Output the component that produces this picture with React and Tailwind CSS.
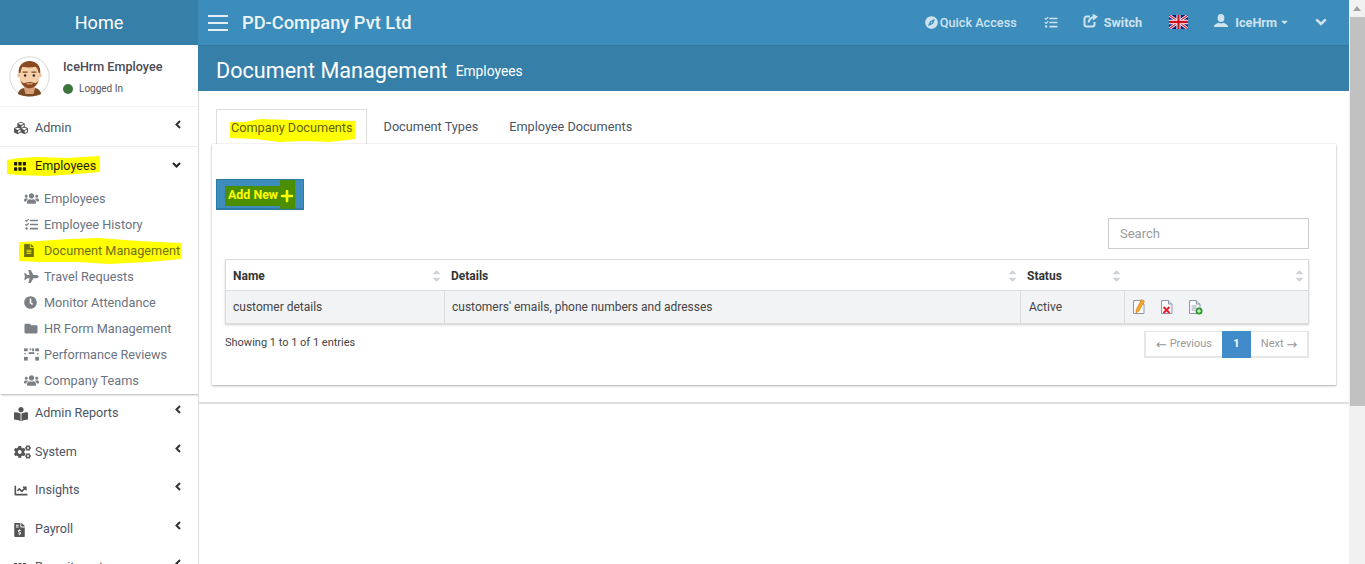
import React from "react";
import {
  FaCubes, FaUsers, FaTasks, FaFileAlt, FaPlane, FaClock, FaFolder,
  FaBookReader, FaCogs, FaChartLine, FaFileInvoiceDollar,
  FaCompass, FaPlus, FaCaretDown, FaSortUp, FaSortDown,
} from "react-icons/fa";

function Marker({ className, points, viewW, viewH }) {
  return (
    <svg viewBox={`0 0 ${viewW} ${viewH}`} preserveAspectRatio="none" className={"absolute max-w-none " + className}>
      <polygon points={points} fill="#ffff00" />
    </svg>
  );
}

function GridIcon({ className }) {
  return (
    <svg viewBox="0 0 12 9" fill="currentColor" className={className}>
      <rect x="0" y="0" width="3.2" height="3.6" rx=".5" />
      <rect x="4.400" y="0" width="3.200" height="3.600" rx=".5" />
      <rect x="8.800" y="0" width="3.200" height="3.600" rx=".5" />
      <rect x="0" y="5.200" width="3.200" height="3.600" rx=".5" />
      <rect x="4.400" y="5.200" width="3.200" height="3.600" rx=".5" />
      <rect x="8.800" y="5.200" width="3.200" height="3.600" rx=".5" />
    </svg>
  );
}

function ReviewIcon({ className }) {
  return (
    <svg viewBox="0 0 16 13" fill="currentColor" className={className}>
      <rect x="0" y="0" width="4" height="3" />
      <rect x="6" y="0" width="1.800" height="2" />
      <rect x="8.600" y="0" width="2" height="3" />
      <rect x="12" y="0" width="4" height="3" />
      <rect x="0.500" y="5" width="1.500" height="1.500" />
      <rect x="5" y="4" width="6" height="2" />
      <rect x="14" y="5" width="1.500" height="1.500" />
      <rect x="0" y="9" width="4" height="4" />
      <rect x="12" y="9" width="4" height="4" />
    </svg>
  );
}

function ShareIcon({ className }) {
  return (
    <svg viewBox="0 0 15 15" fill="none" stroke="currentColor" className={className}>
      <path d="M7 3.500H3.500a2 2 0 0 0-2 2v6a2 2 0 0 0 2 2h6a2 2 0 0 0 2-2V9" strokeWidth="2" />
      <path d="M5.500 9.500c.5-3 2.500-5 5.500-5.500" strokeWidth="2" />
      <path d="M9.500 0.500L15 3.800 10 7.500z" fill="currentColor" stroke="none" />
    </svg>
  );
}

function BustIcon({ className }) {
  return (
    <svg viewBox="0 0 14 13" fill="currentColor" className={className}>
      <ellipse cx="7" cy="4" rx="3.400" ry="4" />
      <path d="M0 13c0-3 2.500-3.300 4.800-4.300.7.500 1.400.8 2.200.8s1.500-.3 2.200-.8C11.500 9.700 14 10 14 13z" />
    </svg>
  );
}

function BoldDown({ className }) {
  return (
    <svg viewBox="0 0 12 8" fill="none" stroke="currentColor" strokeWidth="2.600" className={className}>
      <polyline points="1.300,1.300 6,6 10.700,1.300" />
    </svg>
  );
}

function Chevron({ open }) {
  return open ? (
    <svg viewBox="0 0 9 6" className="h-[6px] w-[9px]" fill="none" stroke="#222" strokeWidth="2">
      <polyline points="1,1 4.500,4.500 8,1" />
    </svg>
  ) : (
    <svg viewBox="0 0 6 9" className="h-[9px] w-[6px]" fill="none" stroke="#333" strokeWidth="2">
      <polyline points="5,1 1.500,4.500 5,8" />
    </svg>
  );
}

function MenuRow({ icon: Icon, label, open, highlight, extra, iconClass }) {
  return (
    <div className={"flex h-[38.6px] shrink-0 items-center pl-[14px] pr-[17px] text-[12.6px] " + (highlight ? "text-[#1d1d00] " : "text-[#4b5563] ") + (extra || "")}>
      <span className="relative flex h-[15px] items-center">
        {highlight && (
          <Marker
            className="-left-[7px] -top-[3px] h-[20px] w-[93px]"
            viewW={93} viewH={20}
            points="0,4 12,2 30,1 60,2 93,0 93,16 70,18 40,20 10,19 0,18"
          />
        )}
        <span className="relative flex w-[21px] items-center">
          <Icon className={iconClass || "h-[13px] w-[13px] text-[#555]"} />
        </span>
        <span className="relative whitespace-nowrap">{label}</span>
      </span>
      <span className={"ml-auto " + (open ? "-mt-[4px]" : "-mt-[8px]")}>
        <Chevron open={open} />
      </span>
    </div>
  );
}

function SubRow({ icon: Icon, label, highlight, iconClass }) {
  return (
    <div className={"flex h-[26px] items-center pl-[24px] text-[12.7px] " + (highlight ? "text-[#6f6f12]" : "text-[#6b7280]")}>
      <span className="relative flex h-[15px] items-center">
        {highlight && (
          <Marker
            className="-left-[5px] -top-[5px] h-[26px] w-[162px]"
            viewW={162} viewH={26}
            points="0,4 20,3 50,1 80,0 120,3 162,5 162,21 130,24 90,26 60,24 20,24 0,23"
          />
        )}
        <span className="relative mr-[4px] flex w-[16px] items-center">
          <Icon className={iconClass || "h-[13px] w-[15px] text-[#7b7f86]"} />
        </span>
        <span className="relative whitespace-nowrap">{label}</span>
      </span>
    </div>
  );
}

function Avatar() {
  return (
    <svg viewBox="0 0 42 42" className="h-[41px] w-[41px] shrink-0">
      <circle cx="21" cy="21" r="20.200" fill="#fff" stroke="#d5d5d5" />
      <path d="M9 39c1-5 5-7 12-7s11 2 12 7c-3 1.600-7 2.500-12 2.500S12 40.600 9 39z" fill="#7a4a25" />
      <path d="M15 32h12l-2 7h-8z" fill="#d9a37d" />
      <circle cx="10.500" cy="20" r="2" fill="#efbe98" />
      <circle cx="31.500" cy="20" r="2" fill="#efbe98" />
      <path d="M11 16c0-6 4-9 10-9s10 3 10 9v8c0 5-5 9-10 9s-10-4-10-9z" fill="#f6cfab" />
      <path d="M10 18c-1-8 4-13 11-13s12 5 11 13l-2-1c0-3-1-5-3-6-4 1-9 1-13 0-1 1-2 3-2 6z" fill="#8a4a20" />
      <circle cx="16.500" cy="20" r="1.300" fill="#3a2a20" />
      <circle cx="25.500" cy="20" r="1.300" fill="#3a2a20" />
      <path d="M14 16.500h5M23 16.500h5" stroke="#7a4a25" strokeWidth="1.200" />
      <path d="M12 25c1 5 5 8 9 8s8-3 9-8c-1 2-3 3-5 2.500-2-1-6-1-8 0-2 .5-4-.5-5-2.500z" fill="#8a4a20" />
      <path d="M18 28.500h6" stroke="#f6cfab" strokeWidth="1" />
    </svg>
  );
}

function Flag() {
  return (
    <svg viewBox="0 0 60 40" preserveAspectRatio="none" className="h-[14px] w-[19px]">
      <rect width="60" height="40" fill="#1a1a7a" />
      <path d="M0 0L60 40M60 0L0 40" stroke="#fff" strokeWidth="8" />
      <path d="M0 0L60 40M60 0L0 40" stroke="#cf1020" strokeWidth="3" />
      <path d="M30 0V40M0 20H60" stroke="#fff" strokeWidth="13" />
      <path d="M30 0V40M0 20H60" stroke="#cf1020" strokeWidth="7" />
    </svg>
  );
}

function Sort() {
  return (
    <span className="relative ml-auto h-[14px] w-[8px] shrink-0 text-[#cfd2d6]">
      <FaSortUp className="absolute left-0 top-0 h-[12px] w-[9px]" />
      <FaSortDown className="absolute left-0 top-[2px] h-[12px] w-[9px]" />
    </span>
  );
}

function DocBase({ children }) {
  return (
    <svg viewBox="0 0 16 16" className="h-[16px] w-[16px]">
      <path d="M2.500 1.500h7l3.500 3.500v9.500h-10.500z" fill="#fbfbfd" stroke="#8d97ad" />
      <path d="M9.500 1.500v3.500h3.500" fill="#dfe4ee" stroke="#8d97ad" />
      {children}
    </svg>
  );
}

function HeadCell({ label, className }) {
  return (
    <div className={"flex items-center pr-[5px] pt-[1px] font-bold text-[#333] " + className}>
      <span>{label}</span>
      <Sort />
    </div>
  );
}

function Arrow({ children }) {
  return <span className="text-[13px] leading-none font-['DejaVu_Sans',sans-serif]">{children}</span>;
}

export default function App() {
  return (
    <div className="flex h-[564px] w-[1365px] overflow-hidden bg-white font-['Roboto',sans-serif]">
      <aside className="flex h-full w-[199px] shrink-0 flex-col overflow-hidden border-r border-[#dcdcdc] bg-white">
        <div className="flex h-[45px] shrink-0 items-center justify-center bg-[#367fa9] text-[18px] text-white">Home</div>
        <div className="flex h-[61px] shrink-0 items-center pl-[9px] pt-[1px]">
          <Avatar />
          <div className="ml-[13px] mt-[3px]">
            <div className="text-[12.6px] font-medium leading-[16px] text-[#4b4b55]">IceHrm Employee</div>
            <div className="mt-[7px] flex items-center text-[10px] leading-[14px] text-[#555]">
              <span className="mr-[6px] h-[10px] w-[10px] rounded-full bg-[#3c763d]" />
              Logged In
            </div>
          </div>
        </div>
        <div className="shrink-0 border-t border-[#f2f2f2]">
          <div className="border-b border-[#f2f2f2]">
            <MenuRow icon={FaCubes} label="Admin" extra="pt-[4px]" iconClass="h-[14px] w-[14px] text-[#555]" />
          </div>
        </div>
        <div className="h-[247px] shrink-0 shadow-[1px_1px_2px_rgba(0,0,0,0.3)]">
          <MenuRow icon={GridIcon} label="Employees" open highlight extra="pt-[2px]" iconClass="h-[9px] w-[12px] text-[#1d1d00]" />
          <div>
            <SubRow icon={FaUsers} label="Employees" />
            <SubRow icon={FaTasks} label="Employee History" />
            <SubRow icon={FaFileAlt} label="Document Management" highlight iconClass="h-[13px] w-[10px] text-[#6f6f12]" />
            <SubRow icon={FaPlane} label="Travel Requests" />
            <SubRow icon={FaClock} label="Monitor Attendance" iconClass="h-[13px] w-[13px] text-[#7b7f86]" />
            <SubRow icon={FaFolder} label="HR Form Management" iconClass="h-[13px] w-[14px] text-[#7b7f86]" />
            <SubRow icon={ReviewIcon} label="Performance Reviews" />
            <SubRow icon={FaUsers} label="Company Teams" />
          </div>
        </div>
        <MenuRow icon={FaBookReader} label="Admin Reports" extra="pt-[2px]" iconClass="h-[14px] w-[14px] text-[#555]" />
        <MenuRow icon={FaCogs} label="System" extra="pt-[2px]" iconClass="h-[14px] w-[17px] text-[#555]" />
        <MenuRow icon={FaChartLine} label="Insights" iconClass="h-[13px] w-[14px] text-[#555]" />
        <MenuRow icon={FaFileInvoiceDollar} label="Payroll" extra="pt-[2px]" iconClass="h-[14px] w-[11px] text-[#555]" />
        <MenuRow icon={GridIcon} label="Recruitment" iconClass="h-[9px] w-[12px] text-[#555]" />
      </aside>

      <main className="-ml-[1px] flex h-full min-w-0 flex-1 flex-col">
        <header className="flex h-[46px] shrink-0 items-center border-b border-[#34789f] bg-[#3c8dbc] pl-[10px] pr-[22px]">
          <div className="flex w-[20px] flex-col gap-[5px]">
            <span className="h-[2px] bg-[#e3eef5]" />
            <span className="h-[2px] bg-[#e3eef5]" />
            <span className="h-[2px] bg-[#e3eef5]" />
          </div>
          <div className="ml-[14px] text-[18.3px] font-medium text-[#eef5f9]">PD-Company Pvt Ltd</div>
          <div className="ml-auto flex items-center text-[12.7px] font-medium text-[#cfe3ef]">
            <FaCompass className="mr-[2px] h-[13px] w-[13px]" />
            <span>Quick Access</span>
            <FaTasks className="ml-[27px] h-[13px] w-[14px]" />
            <ShareIcon className="ml-[25px] -mt-[3px] h-[15px] w-[15px]" />
            <span className="ml-[6px] font-bold">Switch</span>
            <span className="ml-[27px] flex"><Flag /></span>
            <BustIcon className="ml-[26px] -mt-[3px] h-[13px] w-[14px]" />
            <span className="ml-[7px] font-bold">IceHrm</span>
            <FaCaretDown className="ml-[4px] h-[10px] w-[7px]" />
            <BoldDown className="ml-[27px] h-[8px] w-[12px]" />
          </div>
        </header>
        <div className="flex h-[45px] shrink-0 items-center bg-[#367fa9] pl-[18px] pt-[4px] text-white">
          <span className="text-[21.6px] leading-none">Document Management</span>
          <span className="ml-[8px] mt-[3px] text-[13.8px] leading-none">Employees</span>
        </div>
        <div className="h-[313px] shrink-0 border-b-2 border-[#dfdfdf]">
          <div className="relative ml-[18px] mt-[18px] flex h-[35px] text-[12.7px] text-[#4b5563]">
            <div className="flex h-[36px] items-center border border-b-0 border-[#dddddd] bg-white pl-[14px] pr-[13px]">
              <span className="relative flex h-[15px] items-center text-[#5f5f10]">
                <Marker
                  className="-left-[1px] -top-[1px] h-[23px] w-[125px]"
                  viewW={125} viewH={23}
                  points="0,3 15,3 30,0 60,1 90,1 125,2 125,20 100,23 75,22 50,23 25,20 0,19"
                />
                <span className="relative">Company Documents</span>
              </span>
            </div>
            <div className="flex items-center pl-[17px]">Document Types</div>
            <div className="flex items-center pl-[31px]">Employee Documents</div>
          </div>
          <div className="relative ml-[14px] mr-[13px] h-[241px] bg-white pl-[4px] pr-[27px] pt-[35px] shadow-[0_1px_2px_rgba(0,0,0,0.3),0_0_1px_rgba(0,0,0,0.2)]">
            <div className="flex h-[31px] w-[88px] items-center justify-center border border-b-2 border-[#2f7aa6] bg-[#3c8dbc]">
              <span className="relative mt-[3px] flex h-[20px] items-center bg-[#4b8f00] pl-[3px] pr-[1px] text-[12.4px] font-bold text-[#ffff00]">
                Add New
                <span className="absolute right-0 -top-[6px] h-[29px] w-[15px] bg-[#4b8f00]" />
                <FaPlus className="relative ml-[2px] h-[14px] w-[14px]" />
              </span>
            </div>
            <div className="mt-[8px] flex justify-end">
              <div className="flex h-[31px] w-[201px] items-center border border-[#cccccc] px-[11px] text-[13px] text-[#999]">Search</div>
            </div>
            <div className="ml-[9px] mt-[10px] border border-[#dcdcdc] text-[12px] shadow-[0_1px_2px_rgba(0,0,0,0.2)]">
              <div className="grid h-[31px] grid-cols-[219px_576px_104px_1fr] border-b border-[#dcdcdc]">
                <HeadCell label="Name" className="pl-[7px]" />
                <HeadCell label="Details" className="pl-[6px]" />
                <HeadCell label="Status" className="pl-[6px]" />
                <HeadCell label="" className="pl-[6px]" />
              </div>
              <div className="grid h-[32px] grid-cols-[219px_576px_104px_1fr] bg-[#f2f3f5] text-[#444]">
                <div className="flex items-center border-r border-[#dcdcdc] pl-[7px]">customer details</div>
                <div className="flex items-center border-r border-[#dcdcdc] pl-[7px]">customers' emails, phone numbers and adresses</div>
                <div className="flex items-center border-r border-[#dcdcdc] pl-[8px]">Active</div>
                <div className="flex items-center gap-[12px] pl-[6px]">
                  <DocBase>
                    <path d="M10.500 0.500l3 1.500-5.500 10-3 2 .2-3.500z" fill="#f2a71e" stroke="#c8701a" strokeWidth=".5" />
                  </DocBase>
                  <DocBase>
                    <path d="M4.500 8l6 6M10.500 8l-6 6" stroke="#e5222a" strokeWidth="2" />
                  </DocBase>
                  <DocBase>
                    <circle cx="12" cy="12" r="3.500" fill="#2a9a2a" />
                    <path d="M12 10v4M10 12h4" stroke="#fff" strokeWidth="1" />
                    <path d="M4.500 7h5M4.500 9h5M4.500 11h3.500" stroke="#9aa4b8" strokeWidth="1" />
                  </DocBase>
                </div>
              </div>
            </div>
            <div className="ml-[9px] mt-[7px] flex items-start justify-between">
              <div className="mt-[4px] text-[11px] text-[#444]">Showing 1 to 1 of 1 entries</div>
              <div className="flex h-[27px] text-[11px] text-[#999]">
                <div className="flex w-[78px] items-center justify-center border-2 border-t border-r-0 border-[#e6e6e6]"><Arrow>←</Arrow>&nbsp;Previous</div>
                <div className="flex w-[29px] items-center justify-center bg-[#428bca] font-bold text-white">1</div>
                <div className="flex w-[58px] items-center justify-center border-2 border-t border-l-0 border-[#e6e6e6]">Next&nbsp;<Arrow>→</Arrow></div>
              </div>
            </div>
          </div>
        </div>
      </main>

      <div className="flex h-full w-[16px] shrink-0 flex-col bg-[#f1f1f1]">
        <div className="flex h-[17px] items-center justify-center">
          <span className="h-0 w-0 border-x-[4px] border-b-[5px] border-x-transparent border-b-[#a3a3a3]" />
        </div>
        <div className="ml-[1px] h-[389px] bg-[#c1c1c1]" />
      </div>
    </div>
  );
}
